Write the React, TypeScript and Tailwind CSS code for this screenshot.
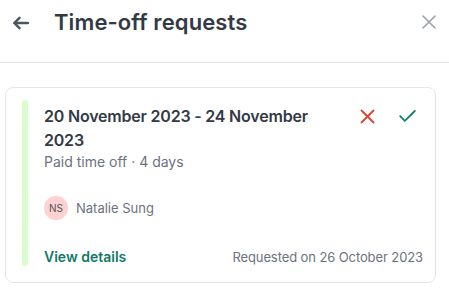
import React from "react";

export default function App() {
  return (
    <div className="w-[449px] h-[290px] bg-white overflow-hidden font-['Inter',sans-serif]">
      {/* Header */}
      <div className="border-b border-[#e3e7ec] pb-[18px]">
        <div className="flex items-center h-[44px] pl-3 pr-[13px]">
          <button className="text-[#4b5563] w-[17px] flex items-center mt-px" aria-label="Back">
            <svg width="17" height="14" viewBox="0 0 17 14" fill="none">
              <path d="M16 7H2.5M7.5 1.8L2.2 7l5.3 5.2" stroke="currentColor" strokeWidth="2.4" strokeLinecap="round" strokeLinejoin="round" />
            </svg>
          </button>
          <h1 className="ml-[25px] text-[22px] font-semibold text-[#323a46] tracking-[0.1px]">Time-off requests</h1>
          <button className="ml-auto text-[#9aa1ab]" aria-label="Close">
            <svg width="14" height="14" viewBox="0 0 14 14" fill="none">
              <path d="M1 1l12 12M13 1L1 13" stroke="currentColor" strokeWidth="1.6" strokeLinecap="round" />
            </svg>
          </button>
        </div>
      </div>

      {/* Card */}
      <div className="mt-6 ml-[5px] mr-[13px] border border-[#e2e6eb] rounded-lg pt-3 pb-[15px] pl-4 pr-3 flex">
        <div className="w-[6px] mb-px rounded-sm bg-[#d8fccc] shrink-0" />
        <div className="flex-1 ml-4 flex flex-col">
          <div className="flex items-start gap-4">
            <div className="flex-1 min-w-0 pt-1">
              <div className="text-[16px] leading-6 font-semibold text-[#323a46] tracking-[-0.2px]">
                20 November 2023 - 24 November 2023
              </div>
              <div className="text-[14px] leading-5 text-[#6b7280]">Paid time off · 4 days</div>
            </div>
            <div className="flex gap-2">
              <button className="w-8 h-8 flex items-center justify-center text-[#dd4430]" aria-label="Decline">
                <svg width="15" height="15" viewBox="0 0 15 15" fill="none">
                  <path d="M1.5 1.5l12 12M13.5 1.5l-12 12" stroke="currentColor" strokeWidth="1.8" strokeLinecap="round" />
                </svg>
              </button>
              <button className="w-8 h-8 flex items-center justify-center text-[#11806c]" aria-label="Approve">
                <svg width="17" height="12" viewBox="0 0 17 12" fill="none">
                  <path d="M1.2 6.2l4.6 4.6L15.8 1" stroke="currentColor" strokeWidth="1.8" strokeLinecap="round" strokeLinejoin="round" />
                </svg>
              </button>
            </div>
          </div>

          <div className="mt-6 flex items-center gap-2">
            <div className="w-6 h-6 rounded-full bg-[#fdd2d0] flex items-center justify-center text-[10px] text-[#4b5563]">
              NS
            </div>
            <span className="text-[13px] text-[#6b7280] mt-[2px]">Natalie Sung</span>
          </div>

          <div className="mt-[27px] flex items-center justify-between">
            <a className="text-[14px] leading-5 font-semibold text-[#0f7a64]">View details</a>
            <span className="text-[13px] leading-5 text-[#6b7280] tracking-[-0.1px]">Requested on 26 October 2023</span>
          </div>
        </div>
      </div>
    </div>
  );
}
